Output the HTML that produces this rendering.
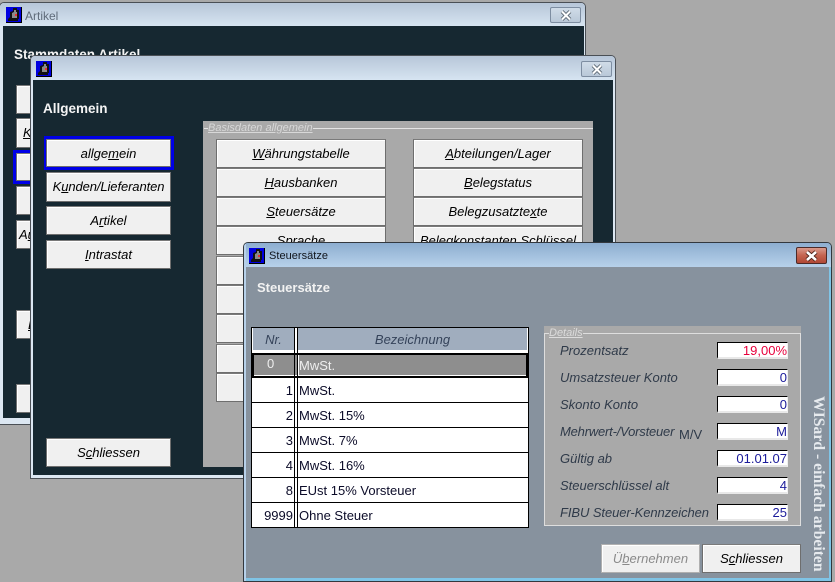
<!DOCTYPE html>
<html><head><meta charset="utf-8"><style>
html,body{margin:0;padding:0;width:835px;height:582px;overflow:hidden;background:#a9a9a9;}
*{box-sizing:border-box;}
body{position:relative;font-family:"Liberation Sans",sans-serif;font-size:13px;}
.win{position:absolute;overflow:hidden;border:1px solid #4a4f55;border-radius:5px 5px 0 0;}
.tb{position:absolute;left:0;right:0;top:0;}
.a{position:absolute;}
.btn{position:absolute;background:#f0f0f0;border:1px solid #6e6e6e;border-top-color:#7a7a7a;box-shadow:inset 1px 1px 0 #fff;font-style:italic;color:#000;text-align:center;font-size:13px;line-height:27px;white-space:nowrap;overflow:hidden;}
.t{position:absolute;white-space:nowrap;}
.x{position:absolute;width:31px;height:16px;border:1px solid #7d8da1;border-radius:2px;background:linear-gradient(#d0dce8,#b9c8d8);}
.x svg{position:absolute;left:8px;top:1px;}
.in{position:absolute;left:717px;width:71px;height:17px;background:#fff;border-top:1px solid #000;border-left:1px solid #000;border-right:1px solid #efefef;border-bottom:2px solid #e8e8e8;text-align:right;padding-right:0;line-height:15px;color:#1a1a9a;}
.lb{position:absolute;left:560px;font-style:italic;color:#2f3a49;white-space:nowrap;line-height:15px;}
.r{position:absolute;left:252px;width:276px;height:25px;background:#fff;border-bottom:1px solid #000;line-height:26px;color:#0b0b28;}
.r .n{position:absolute;right:235px;white-space:nowrap;}
.r .d{position:absolute;left:47px;white-space:nowrap;}
</style></head><body>

<!-- window 1 -->
<div class="win" style="left:-1px;top:2px;width:587px;height:423px;background:#dce7f2;">
  <div class="tb" style="height:23px;background:linear-gradient(#b7c6d8,#d6e4f1);"></div>
  <svg class="a" style="left:6px;top:4px" width="16" height="16" viewBox="0 0 16 16"><rect width="16" height="16" fill="#000"/><rect width="15" height="15" fill="#0000e0"/><path d="M7 1h4v2h2v9h-1v2H2v-2l2-2V5l3-1z" fill="#111"/><path d="M8 3h2v2h1v6H6V6l2-1z" fill="#8a8a8a"/><rect x="9" y="7" width="2" height="2" fill="#e83030"/></svg>
  <div class="t" style="left:25px;top:6px;color:#5f6b7a;font-size:12px;">Artikel</div>
  <div class="x" style="left:550px;top:4px;"><svg width="14" height="13" viewBox="0 0 14 13"><path d="M3 2.5L11 10.5M11 2.5L3 10.5" stroke="#5c6874" stroke-width="3.8"/><path d="M3 2.5L11 10.5M11 2.5L3 10.5" stroke="#fff" stroke-width="2"/></svg></div>
  <div class="a" style="left:3px;top:23px;width:581px;height:392px;background:#162831;">
    <div class="t" style="left:11px;top:21px;color:#f4f4f4;font-weight:bold;font-size:13.5px;">Stammdaten Artikel</div>
    <div class="btn" style="left:13px;top:59px;width:170px;height:29px;"></div>
    <div class="btn" style="left:13px;top:92px;width:170px;height:30px;text-align:left;padding-left:6px;"><u>K</u>unden</div>
    <div class="a" style="left:10px;top:124px;width:40px;height:34px;background:#0000e6;"></div>
    <div class="btn" style="left:13px;top:127px;width:170px;height:28px;"></div>
    <div class="btn" style="left:13px;top:160px;width:170px;height:29px;"></div>
    <div class="btn" style="left:13px;top:194px;width:170px;height:29px;text-align:left;padding-left:2px;">A<u>u</u>ftrag</div>
    <div class="btn" style="left:13px;top:284px;width:170px;height:29px;text-align:left;padding-left:11px;"><u>L</u>ager</div>
    <div class="btn" style="left:13px;top:358px;width:170px;height:29px;"></div>
  </div>
</div>

<!-- window 2 -->
<div class="win" style="left:30px;top:55px;width:586px;height:424px;background:#dce7f2;">
  <div class="tb" style="height:24px;background:linear-gradient(#b7c6d8,#d6e4f1);"></div>
  <svg class="a" style="left:5px;top:5px" width="16" height="16" viewBox="0 0 16 16"><rect width="16" height="16" fill="#000"/><rect width="15" height="15" fill="#0000e0"/><path d="M7 1h4v2h2v9h-1v2H2v-2l2-2V5l3-1z" fill="#111"/><path d="M8 3h2v2h1v6H6V6l2-1z" fill="#8a8a8a"/><rect x="9" y="7" width="2" height="2" fill="#e83030"/></svg>
  <div class="x" style="left:550px;top:5px;"><svg width="14" height="13" viewBox="0 0 14 13"><path d="M3 2.5L11 10.5M11 2.5L3 10.5" stroke="#5c6874" stroke-width="3.8"/><path d="M3 2.5L11 10.5M11 2.5L3 10.5" stroke="#fff" stroke-width="2"/></svg></div>
  <div class="a" style="left:2px;top:24px;width:580px;height:395px;background:#162831;">
    <div class="t" style="left:10px;top:21px;color:#f4f4f4;font-weight:bold;font-size:13.5px;">Allgemein</div>
    <div class="a" style="left:10.5px;top:56px;width:130px;height:34px;background:#0000e6;"></div>
    <div class="btn" style="left:13px;top:59px;width:125px;height:28px;">allge<u>m</u>ein</div>
    <div class="btn" style="left:13px;top:92px;width:125px;height:30px;line-height:28px;letter-spacing:-.1px;">K<u>u</u>nden/Lieferanten</div>
    <div class="btn" style="left:13px;top:126px;width:125px;height:29px;">A<u>r</u>tikel</div>
    <div class="btn" style="left:13px;top:160px;width:125px;height:29px;"><u>I</u>ntrastat</div>
    <div class="btn" style="left:13px;top:358px;width:125px;height:29px;">S<u>c</u>hliessen</div>

    <!-- panel -->
    <div class="a" style="left:170px;top:41px;width:390px;height:346px;background:#a9a9a9;">
      <div class="a" style="left:1px;top:7px;width:389px;height:1px;background:#e4e4e4;"></div>
      <div class="t" style="left:5px;top:0px;background:#a9a9a9;color:#d8d8d8;font-style:italic;font-size:11px;line-height:15px;text-decoration:underline;">Basisdaten allgemein</div>
      <div class="btn" style="left:13px;top:18px;width:170px;height:29px;"><u>W</u>ährungstabelle</div>
      <div class="btn" style="left:13px;top:47px;width:170px;height:29px;"><u>H</u>ausbanken</div>
      <div class="btn" style="left:13px;top:76px;width:170px;height:29px;"><u>S</u>teuersätze</div>
      <div class="btn" style="left:13px;top:105px;width:170px;height:29px;">Sprache</div>
      <div class="btn" style="left:13px;top:135px;width:170px;height:29px;"></div>
      <div class="btn" style="left:13px;top:164px;width:170px;height:29px;"></div>
      <div class="btn" style="left:13px;top:193px;width:170px;height:29px;"><u>A</u>bc</div>
      <div class="btn" style="left:13px;top:223px;width:170px;height:29px;"></div>
      <div class="btn" style="left:13px;top:252px;width:170px;height:29px;"></div>
      <div class="btn" style="left:210px;top:18px;width:170px;height:29px;"><u>A</u>bteilungen/Lager</div>
      <div class="btn" style="left:210px;top:47px;width:170px;height:29px;"><u>B</u>elegstatus</div>
      <div class="btn" style="left:210px;top:76px;width:170px;height:29px;">Belegzusatzte<u>x</u>te</div>
      <div class="btn" style="left:210px;top:105px;width:170px;height:29px;">Belegkonstanten Schlüssel</div>
    </div>
  </div>
</div>

<!-- window 3 -->
<div class="win" style="left:243px;top:242px;width:589px;height:340px;background:#7fc4e6;border-color:#33383e;">
  <div class="tb" style="height:24px;background:linear-gradient(#8daed0,#b7d1ea);"></div>
  <div class="a" style="left:0;top:0;width:2px;height:339px;background:#b7d1ea;"></div>
  <svg class="a" style="left:5px;top:5px" width="16" height="16" viewBox="0 0 16 16"><rect width="16" height="16" fill="#000"/><rect width="15" height="15" fill="#0000e0"/><path d="M7 1h4v2h2v9h-1v2H2v-2l2-2V5l3-1z" fill="#111"/><path d="M8 3h2v2h1v6H6V6l2-1z" fill="#8a8a8a"/><rect x="9" y="7" width="2" height="2" fill="#e83030"/></svg>
  <div class="t" style="left:25px;top:6px;color:#10151c;font-size:11px;line-height:15px;letter-spacing:.03px;">Steuersätze</div>
  <div class="a" style="left:552px;top:4px;width:31px;height:17px;border:1px solid #4c2a28;border-radius:2px;background:linear-gradient(#d99a8c 0%,#c4634f 50%,#b04836 100%);"><svg style="position:absolute;left:8px;top:2px" width="13" height="12" viewBox="0 0 13 12"><path d="M2 2L11 10M11 2L2 10" stroke="#4a2018" stroke-width="4.4"/><path d="M2 2L11 10M11 2L2 10" stroke="#fff" stroke-width="2.6"/></svg></div>
  <div class="a" style="left:2px;top:24px;width:583px;height:311px;background:#87929e;"></div>
</div>

<div class="t" style="left:257px;top:280px;color:#f2f2f2;font-weight:bold;font-size:13px;">Steuersätze</div>

<!-- table -->
<div class="a" style="left:251px;top:327px;width:278px;height:201px;background:#fff;border:1px solid #000;"></div>
<div class="a" style="left:253px;top:328px;width:41px;height:22px;background:#a0adbe;color:#35435a;font-style:italic;text-align:center;line-height:23px;">Nr.</div>
<div class="a" style="left:298px;top:328px;width:229px;height:22px;background:#a0adbe;color:#35435a;font-style:italic;text-align:center;line-height:23px;">Bezeichnung</div>
<div class="a" style="left:252px;top:353px;width:276px;height:25px;background:#8e8e8e;border:2px solid #000;color:#eee;line-height:22px;box-shadow:inset 0 -1px 0 #fff;">
  <span class="t" style="left:13px;top:-2px;">0</span><span class="t" style="left:45px;top:0;">MwSt.</span>
</div>
<div class="r" style="top:378px;"><span class="n">1</span><span class="d">MwSt.</span></div>
<div class="r" style="top:403px;"><span class="n">2</span><span class="d">MwSt. 15%</span></div>
<div class="r" style="top:428px;"><span class="n">3</span><span class="d">MwSt. 7%</span></div>
<div class="r" style="top:453px;"><span class="n">4</span><span class="d">MwSt. 16%</span></div>
<div class="r" style="top:478px;"><span class="n">8</span><span class="d">EUst 15% Vorsteuer</span></div>
<div class="r" style="top:503px;height:24px;border-bottom:0;"><span class="n">9999</span><span class="d">Ohne Steuer</span></div>
<div class="a" style="left:294px;top:328px;width:1px;height:199px;background:#000;"></div>
<div class="a" style="left:297px;top:328px;width:1px;height:199px;background:#000;"></div>
<div class="a" style="left:298px;top:355px;width:1px;height:21px;background:#fff;"></div>

<!-- details -->
<div class="a" style="left:544px;top:326px;width:257px;height:200px;background:#a9a9a9;"></div>
<div class="a" style="left:544px;top:333px;width:257px;height:193px;border:1px solid #dedede;"></div>
<div class="t" style="left:549px;top:326px;background:#a9a9a9;color:#dcdcdc;font-style:italic;font-size:11px;line-height:14px;text-decoration:underline;">Details</div>

<div class="lb" style="top:343px;">Prozentsatz</div>
<div class="lb" style="top:370px;">Umsatzsteuer Konto</div>
<div class="lb" style="top:397px;">Skonto Konto</div>
<div class="lb" style="top:424px;letter-spacing:-.2px;">Mehrwert-/Vorsteuer</div>
<div class="t" style="left:679px;top:427px;color:#2f3a49;line-height:15px;">M/V</div>
<div class="lb" style="top:451px;">Gültig ab</div>
<div class="lb" style="top:478px;">Steuerschlüssel alt</div>
<div class="lb" style="top:505px;letter-spacing:-.08px;">FIBU Steuer-Kennzeichen</div>

<div class="in" style="top:342px;color:#e8003c;">19,00%</div>
<div class="in" style="top:369px;">0</div>
<div class="in" style="top:396px;">0</div>
<div class="in" style="top:423px;">M</div>
<div class="in" style="top:450px;">01.01.07</div>
<div class="in" style="top:477px;">4</div>
<div class="in" style="top:504px;">25</div>

<div class="btn" style="left:601px;top:544px;width:99px;height:29px;color:#8a8a8a;border-color:#b0b0b0;">Ü<u>b</u>ernehmen</div>
<div class="btn" style="left:702px;top:544px;width:99px;height:29px;">S<u>c</u>hliessen</div>

<div class="t" style="left:810px;top:396px;writing-mode:vertical-rl;font-family:'Liberation Serif',serif;font-weight:bold;font-size:15.7px;line-height:17px;color:#e6eaee;">WISard - einfach arbeiten</div>

</body></html>
